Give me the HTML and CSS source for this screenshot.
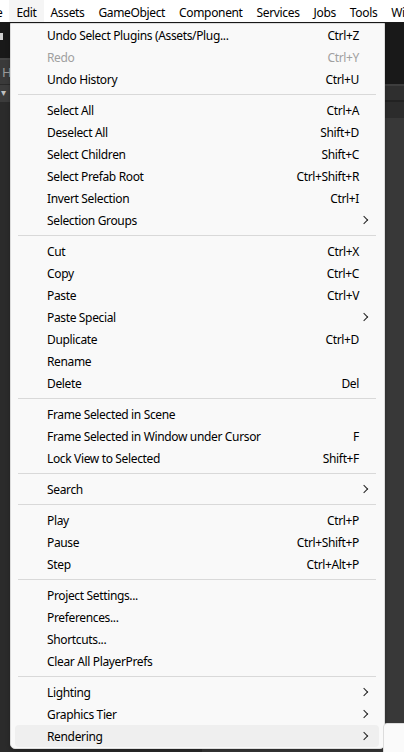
FILE: index.html
```html
<!DOCTYPE html>
<html>
<head>
<meta charset="utf-8">
<link rel="stylesheet" href="styles.css">
</head>
<body>
<div class="menubar">
  <span class="mb-item cut">e</span>
  <span class="mb-item active">Edit</span>
  <span class="mb-item">Assets</span>
  <span class="mb-item">GameObject</span>
  <span class="mb-item">Component</span>
  <span class="mb-item">Services</span>
  <span class="mb-item">Jobs</span>
  <span class="mb-item">Tools</span>
  <span class="mb-item">Wi</span>
</div>
<div class="workspace">
  <div class="pane pane-left">
    <div class="band toolbar-l"><span class="tb-icon"></span></div>
    <div class="band header-l"><span class="h-letter">H</span></div>
    <div class="band sub-l"><span class="tri">&#9662;</span></div>
    <div class="band body"></div>
  </div>
  <div class="pane pane-right">
    <div class="band toolbar-r"></div>
    <div class="band line-a"></div>
    <div class="band tab-r"></div>
    <div class="band line-b"></div>
    <div class="band tab-r2"></div>
    <div class="band body"></div>
  </div>
</div>

<div class="menu">
  <div class="row"><span class="label">Undo Select Plugins (Assets/Plug...</span><span class="key">Ctrl+Z</span></div>
  <div class="row disabled"><span class="label">Redo</span><span class="key">Ctrl+Y</span></div>
  <div class="row"><span class="label">Undo History</span><span class="key">Ctrl+U</span></div>
  <div class="sep"></div>
  <div class="row"><span class="label">Select All</span><span class="key">Ctrl+A</span></div>
  <div class="row"><span class="label">Deselect All</span><span class="key">Shift+D</span></div>
  <div class="row"><span class="label">Select Children</span><span class="key">Shift+C</span></div>
  <div class="row"><span class="label">Select Prefab Root</span><span class="key">Ctrl+Shift+R</span></div>
  <div class="row"><span class="label">Invert Selection</span><span class="key">Ctrl+I</span></div>
  <div class="row sub"><span class="label">Selection Groups</span><span class="arrow"></span></div>
  <div class="sep"></div>
  <div class="row"><span class="label">Cut</span><span class="key">Ctrl+X</span></div>
  <div class="row"><span class="label">Copy</span><span class="key">Ctrl+C</span></div>
  <div class="row"><span class="label">Paste</span><span class="key">Ctrl+V</span></div>
  <div class="row sub"><span class="label">Paste Special</span><span class="arrow"></span></div>
  <div class="row"><span class="label">Duplicate</span><span class="key">Ctrl+D</span></div>
  <div class="row"><span class="label">Rename</span></div>
  <div class="row"><span class="label">Delete</span><span class="key">Del</span></div>
  <div class="sep"></div>
  <div class="row"><span class="label">Frame Selected in Scene</span></div>
  <div class="row"><span class="label">Frame Selected in Window under Cursor</span><span class="key">F</span></div>
  <div class="row"><span class="label">Lock View to Selected</span><span class="key">Shift+F</span></div>
  <div class="sep"></div>
  <div class="row sub"><span class="label">Search</span><span class="arrow"></span></div>
  <div class="sep"></div>
  <div class="row"><span class="label">Play</span><span class="key">Ctrl+P</span></div>
  <div class="row"><span class="label">Pause</span><span class="key">Ctrl+Shift+P</span></div>
  <div class="row"><span class="label">Step</span><span class="key">Ctrl+Alt+P</span></div>
  <div class="sep"></div>
  <div class="row"><span class="label">Project Settings...</span></div>
  <div class="row"><span class="label">Preferences...</span></div>
  <div class="row"><span class="label">Shortcuts...</span></div>
  <div class="row"><span class="label">Clear All PlayerPrefs</span></div>
  <div class="sep"></div>
  <div class="row sub"><span class="label">Lighting</span><span class="arrow"></span></div>
  <div class="row sub"><span class="label">Graphics Tier</span><span class="arrow"></span></div>
  <div class="row sub hover"><span class="label">Rendering</span><span class="arrow"></span></div>
</div>
<div class="submenu"></div>
</body>
</html>
```

FILE: styles.css
```css
* { box-sizing: border-box; }
html, body {
  margin: 0;
  padding: 0;
  width: 404px;
  height: 752px;
  overflow: hidden;
  background: #2e2e2e;
  font-family: "Noto Sans", "Open Sans", sans-serif;
  font-size: 12px;
  letter-spacing: -0.35px;
  color: #000;
}
.menubar {
  height: 22px;
  background: #ffffff;
  display: flex;
  align-items: flex-start;
  white-space: nowrap;
  margin-left: -11px;
}
.mb-item {
  padding: 3px 7px 0;
  height: 22px;
  line-height: 19px;
  color: #000;
}
.mb-item.active { background: #f5f5f5; }

.workspace {
  display: flex;
  height: 730px;
}
.pane { flex: 1; display: flex; flex-direction: column; }
.band { flex: none; position: relative; }
.toolbar-l { height: 36px; background: #191919; }
.tb-icon {
  position: absolute;
  left: 0; top: 11px;
  width: 3px; height: 7px;
  background: #d0d0d0;
}
.header-l { height: 26px; background: #3a3a3a; border-top: 2px solid #444; }
.h-letter {
  position: absolute;
  left: 2px; top: 3px;
  color: #9a9a9a;
  font-size: 13px;
}
.sub-l { height: 18px; background: #3c3c3c; border-top: 1px solid #2a2a2a; }
.tri {
  position: absolute;
  left: 1px; top: 0px;
  color: #c0c0c0;
  font-size: 10px;
}
.toolbar-r { height: 62px; background: #191919; }
.line-a { height: 2px; background: #3e3e3e; }
.tab-r { height: 14px; background: #2f2f2f; }
.line-b { height: 2px; background: #222; }
.tab-r2 { height: 16px; background: #2c2c2c; }
.body { flex: 1; background: #383838; }
.pane-left .body { background: #2b2b2b; }

.menu {
  position: absolute;
  left: 10px;
  top: 23px;
  width: 375px;
  background: #f9f9f9;
  border: 1px solid #dcdcdc;
  border-radius: 0 0 5px 5px;
  padding: 0 0 1px 0;
  box-shadow: 0 2px 4px rgba(0,0,0,0.25);
}
.row {
  height: 22px;
  margin: 0 5px 0 4px;
  padding: 0 20px 0 32px;
  display: flex;
  align-items: center;
  border-radius: 4px;
  position: relative;
  white-space: nowrap;
}
.row .label { flex: 1; }
.row .key { color: #000; }
.row.disabled .label, .row.disabled .key { color: #a0a0a0; }
.row.hover { background: #efefef; }
.arrow {
  position: absolute;
  right: 12px;
  top: 8px;
  width: 6px;
  height: 6px;
  border-right: 1.3px solid #222;
  border-top: 1.3px solid #222;
  transform: rotate(45deg);
}
.sep {
  height: 1px;
  background: #d9d9d9;
  margin: 4px 8px 4px 7px;
}
.submenu {
  position: absolute;
  left: 383px;
  top: 723px;
  width: 40px;
  height: 40px;
  background: #fafafa;
  border: 1px solid #dcdcdc;
  border-radius: 4px;
}
```
